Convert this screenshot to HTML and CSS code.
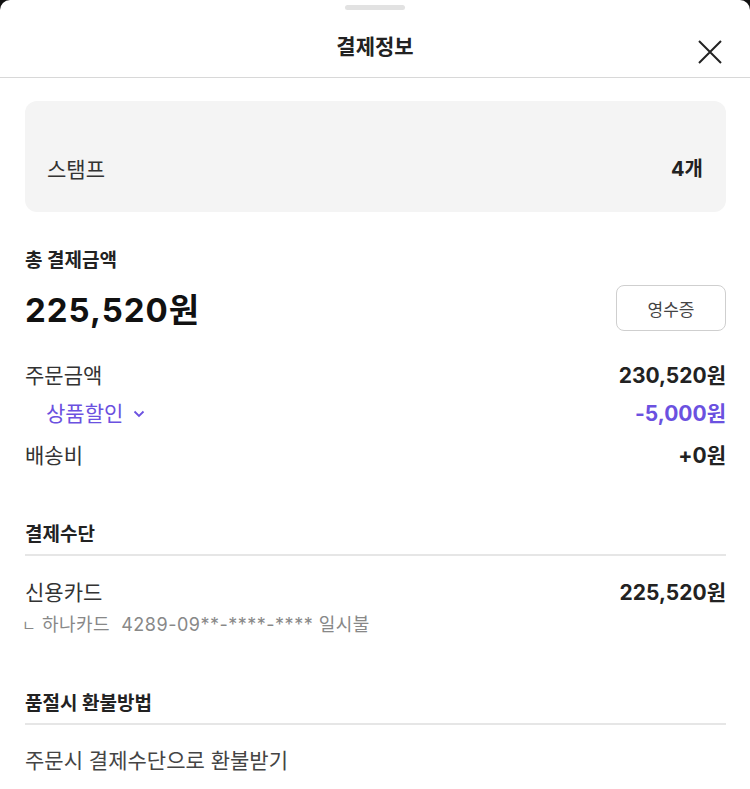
FILE: index.html
```html
<!DOCTYPE html>
<html lang="ko">
<head>
<meta charset="utf-8">
<link rel="stylesheet" href="styles.css">
</head>
<body>
<div class="sheet">
  <div class="handle"></div>
  <header class="header">
    <h1 class="title">결제정보</h1>
    <button class="close" aria-label="닫기">
      <svg width="24" height="24" viewBox="0 0 24 24"><path d="M1 1L23 23M23 1L1 23" stroke="#222" stroke-width="2" fill="none"/></svg>
    </button>
  </header>
  <main class="content">
    <div class="stamp-card">
      <span class="stamp-label">스탬프</span>
      <span class="stamp-value">4개</span>
    </div>

    <section class="total">
      <h2 class="section-title">총 결제금액</h2>
      <div class="total-row">
        <span class="total-amount">225,520원</span>
        <button class="receipt">영수증</button>
      </div>
      <div class="rows">
        <div class="row"><span class="label">주문금액</span><span class="value">230,520원</span></div>
        <div class="row discount"><span class="label sub">상품할인
          <svg width="14" height="14" viewBox="0 0 14 14"><path d="M2.5 4.5l4.5 4.5 4.5-4.5" stroke="currentColor" stroke-width="1.8" fill="none"/></svg></span><span class="value">-5,000원</span></div>
        <div class="row ship"><span class="label">배송비</span><span class="value">+0원</span></div>
      </div>
    </section>

    <section class="block">
      <h2 class="block-title">결제수단</h2>
      <div class="row pay"><span class="label">신용카드</span><span class="value">225,520원</span></div>
      <div class="card-info"><span class="corner">ㄴ</span> 하나카드&nbsp; 4289-09**-****-**** 일시불</div>
    </section>

    <section class="block">
      <h2 class="block-title">품절시 환불방법</h2>
      <div class="refund">주문시 결제수단으로 환불받기</div>
    </section>
  </main>
</div>
</body>
</html>
```
FILE: styles.css
```css
* { box-sizing: border-box; }
html, body { margin: 0; padding: 0; background: #111; }
body {
  font-family: "Inter", "Noto Sans CJK KR", sans-serif;
  color: #222;
  width: 750px;
  height: 789px;
  overflow: hidden;
}
.sheet {
  background: #fff;
  border-radius: 10px 10px 0 0;
  height: 789px;
}
.handle {
  width: 60px;
  height: 5px;
  border-radius: 3px;
  background: #e2e2e2;
  margin: 0 auto;
  position: relative;
  top: 5px;
}
.header {
  height: 73px;
  border-bottom: 1px solid #d8d8d8;
  display: flex;
  align-items: center;
  justify-content: center;
  position: relative;
}
.title {
  margin: 0;
  font-size: 21px;
  font-weight: 700;
  color: #222;
  position: relative;
  top: 4px;
}
.close {
  position: absolute;
  right: 28px;
  top: 35px;
  background: none;
  border: 0;
  padding: 0;
  width: 24px;
  height: 24px;
}
.content { padding: 23px 24px 0 25px; }
.stamp-card {
  background: #f4f4f4;
  border-radius: 12px;
  height: 111px;
  display: flex;
  align-items: center;
  justify-content: space-between;
  padding: 22px 23px 0 22px;
}
.stamp-label { font-size: 21px; color: #333; }
.stamp-value { font-size: 20px; font-weight: 700; color: #222; }

.total { margin-top: 35px; }
.section-title {
  margin: 0;
  font-size: 19px;
  font-weight: 700;
  line-height: 28px;
}
.total-row {
  display: flex;
  align-items: center;
  justify-content: space-between;
  margin-top: 12px;
}
.total-amount {
  font-size: 33px;
  font-weight: 700;
  color: #111;
  line-height: 40px;
  letter-spacing: 1px;
}
.receipt {
  width: 110px;
  height: 46px;
  border: 1px solid #cfcfcf;
  border-radius: 8px;
  background: #fff;
  font-family: inherit;
  font-size: 17px;
  color: #444;
  position: relative;
  top: -2px;
}
.rows { margin-top: 28px; display: flex; flex-direction: column; gap: 9px; }
.row {
  display: flex;
  justify-content: space-between;
  align-items: center;
  line-height: 29px;
}
.row.ship { margin-top: 4px; }
.label { font-size: 21px; color: #333; }
.value { font-size: 21px; font-weight: 700; color: #222; }
.label.sub { padding-left: 21px; display: inline-flex; align-items: center; gap: 9px; }
.discount .label, .discount .value { color: #6b51e0; }

.block { margin-top: 51px; }
.block + .block { margin-top: 50px; }
.block-title {
  margin: 0;
  font-size: 19px;
  font-weight: 700;
  line-height: 28px;
  padding-bottom: 5px;
  border-bottom: 2px solid #e6e6e6;
}
.row.pay { margin-top: 22px; }
.card-info {
  font-size: 18px;
  color: #888;
  line-height: 28px;
  margin-top: 4px;
  letter-spacing: 0.5px;
}
.corner { font-size: 15px; margin-left: -3px; }
.refund {
  font-size: 21px;
  color: #444;
  margin-top: 21px;
  line-height: 30px;
}
```
